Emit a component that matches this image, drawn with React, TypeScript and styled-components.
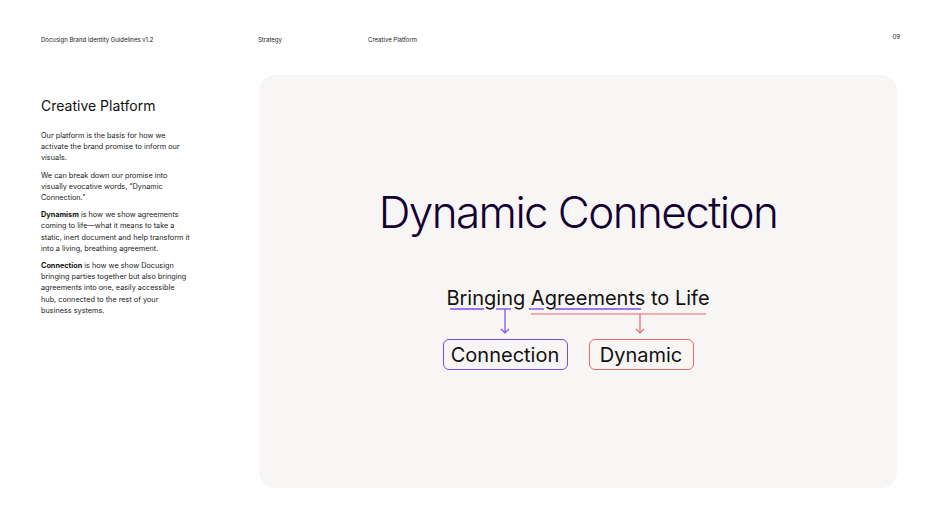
import styled, { createGlobalStyle } from "styled-components";

const Global = createGlobalStyle`
  html, body { margin: 0; padding: 0; background: #fff; }
  body { font-family: "Inter", "Noto Sans", sans-serif; color: #130032; }
`;

const Page = styled.div`
  width: 940px;
  height: 528px;
  position: relative;
  box-sizing: border-box;
  padding: 34px 41px 0 41px;
`;

const Header = styled.div`
  display: grid;
  grid-template-columns: 217px 110px 1fr auto;
  font-size: 6px;
  color: #1a1a1a;
  height: 39px;
  align-items: start;
  padding-top: 2px;
`;

const PageNo = styled.span`
  margin-top: -3px;
  margin-right: -1px;
`;

const Body = styled.div`
  display: flex;
  gap: 69px;
`;

const Side = styled.div`
  width: 149px;
  padding-top: 22px;
`;

const Title = styled.h1`
  font-size: 14px;
  font-weight: 400;
  margin: 0 0 16px 0;
  color: #111;
`;

const Para = styled.p`
  font-size: 7.3px;
  line-height: 11.2px;
  margin: 0 0 6px 0;
  color: #222;
  b { font-weight: 700; color: #111; }
`;

const Panel = styled.div`
  width: 638px;
  height: 413px;
  background: #f8f6f4;
  border-radius: 16px;
  display: flex;
  flex-direction: column;
  align-items: center;
  padding-top: 105px;
  box-sizing: border-box;
`;

const Hero = styled.div`
  font-size: 44px;
  font-weight: 300;
  letter-spacing: -1.6px;
  color: #130032;
  line-height: 64px;
`;

const Diagram = styled.div`
  position: relative;
  margin-top: 41px;
  width: 300px;
  display: flex;
  flex-direction: column;
  align-items: center;
`;

const Phrase = styled.div`
  font-size: 20px;
  color: #111;
  line-height: 26px;
`;

const Lines = styled.svg`
  position: absolute;
  left: 0;
  top: 0;
  pointer-events: none;
`;

const Boxes = styled.div`
  display: flex;
  gap: 21px;
  margin-top: 28px;
  margin-right: 20px;
`;

const Tag = styled.div<{ $c: string; $w: number }>`
  width: ${(p) => p.$w}px;
  height: 31px;
  box-sizing: border-box;
  border: 1.5px solid ${(p) => p.$c};
  border-radius: 6px;
  font-size: 20px;
  display: flex;
  align-items: center;
  justify-content: center;
  color: #111;
`;

const P = "#7b4ae8";
const R = "#e8676b";

export default function App() {
  // diagram origin in page coords
  const ox = 429;
  const oy = 283;
  const seg = (a: number, b: number) => <line x1={a - ox} x2={b - ox} y1={307 - oy} y2={307 - oy} stroke={P} strokeWidth={1.3} />;
  return (
    <>
      <Global />
      <Page>
        <Header>
          <span>Docusign Brand Identity Guidelines v1.2</span>
          <span>Strategy</span>
          <span>Creative Platform</span>
          <PageNo>09</PageNo>
        </Header>
        <Body>
          <Side>
            <Title>Creative Platform</Title>
            <Para>Our platform is the basis for how we activate the brand promise to inform our visuals.</Para>
            <Para>We can break down our promise into visually evocative words, “Dynamic Connection.”</Para>
            <Para><b>Dynamism</b> is how we show agreements coming to life—what it means to take a static, inert document and help transform it into a living, breathing agreement.</Para>
            <Para><b>Connection</b> is how we show Docusign bringing parties together but also bringing agreements into one, easily accessible hub, connected to the rest of your business systems.</Para>
          </Side>
          <Panel>
            <Hero>Dynamic Connection</Hero>
            <Diagram>
              <Phrase>Bringing Agreements to Life</Phrase>
              <Lines width="300" height="60">
                {seg(451, 485)}
                {seg(497, 512)}
                {seg(530, 545)}
                {seg(556, 642)}
                <line x1={506 - ox} x2={506 - ox} y1={307 - oy} y2={331 - oy} stroke={P} strokeWidth={1.2} />
                <polyline points={`${502 - ox},${327 - oy} ${506 - ox},${331 - oy} ${510 - ox},${327 - oy}`} fill="none" stroke={P} strokeWidth={1.2} />
                <line x1={532 - ox} x2={707 - ox} y1={312 - oy} y2={312 - oy} stroke={R} strokeWidth={1.2} />
                <line x1={641 - ox} x2={641 - ox} y1={312 - oy} y2={331 - oy} stroke={R} strokeWidth={1.2} />
                <polyline points={`${637 - ox},${327 - oy} ${641 - ox},${331 - oy} ${645 - ox},${327 - oy}`} fill="none" stroke={R} strokeWidth={1.2} />
              </Lines>
              <Boxes>
                <Tag $c={P} $w={125}>Connection</Tag>
                <Tag $c={R} $w={105}>Dynamic</Tag>
              </Boxes>
            </Diagram>
          </Panel>
        </Body>
      </Page>
    </>
  );
}
